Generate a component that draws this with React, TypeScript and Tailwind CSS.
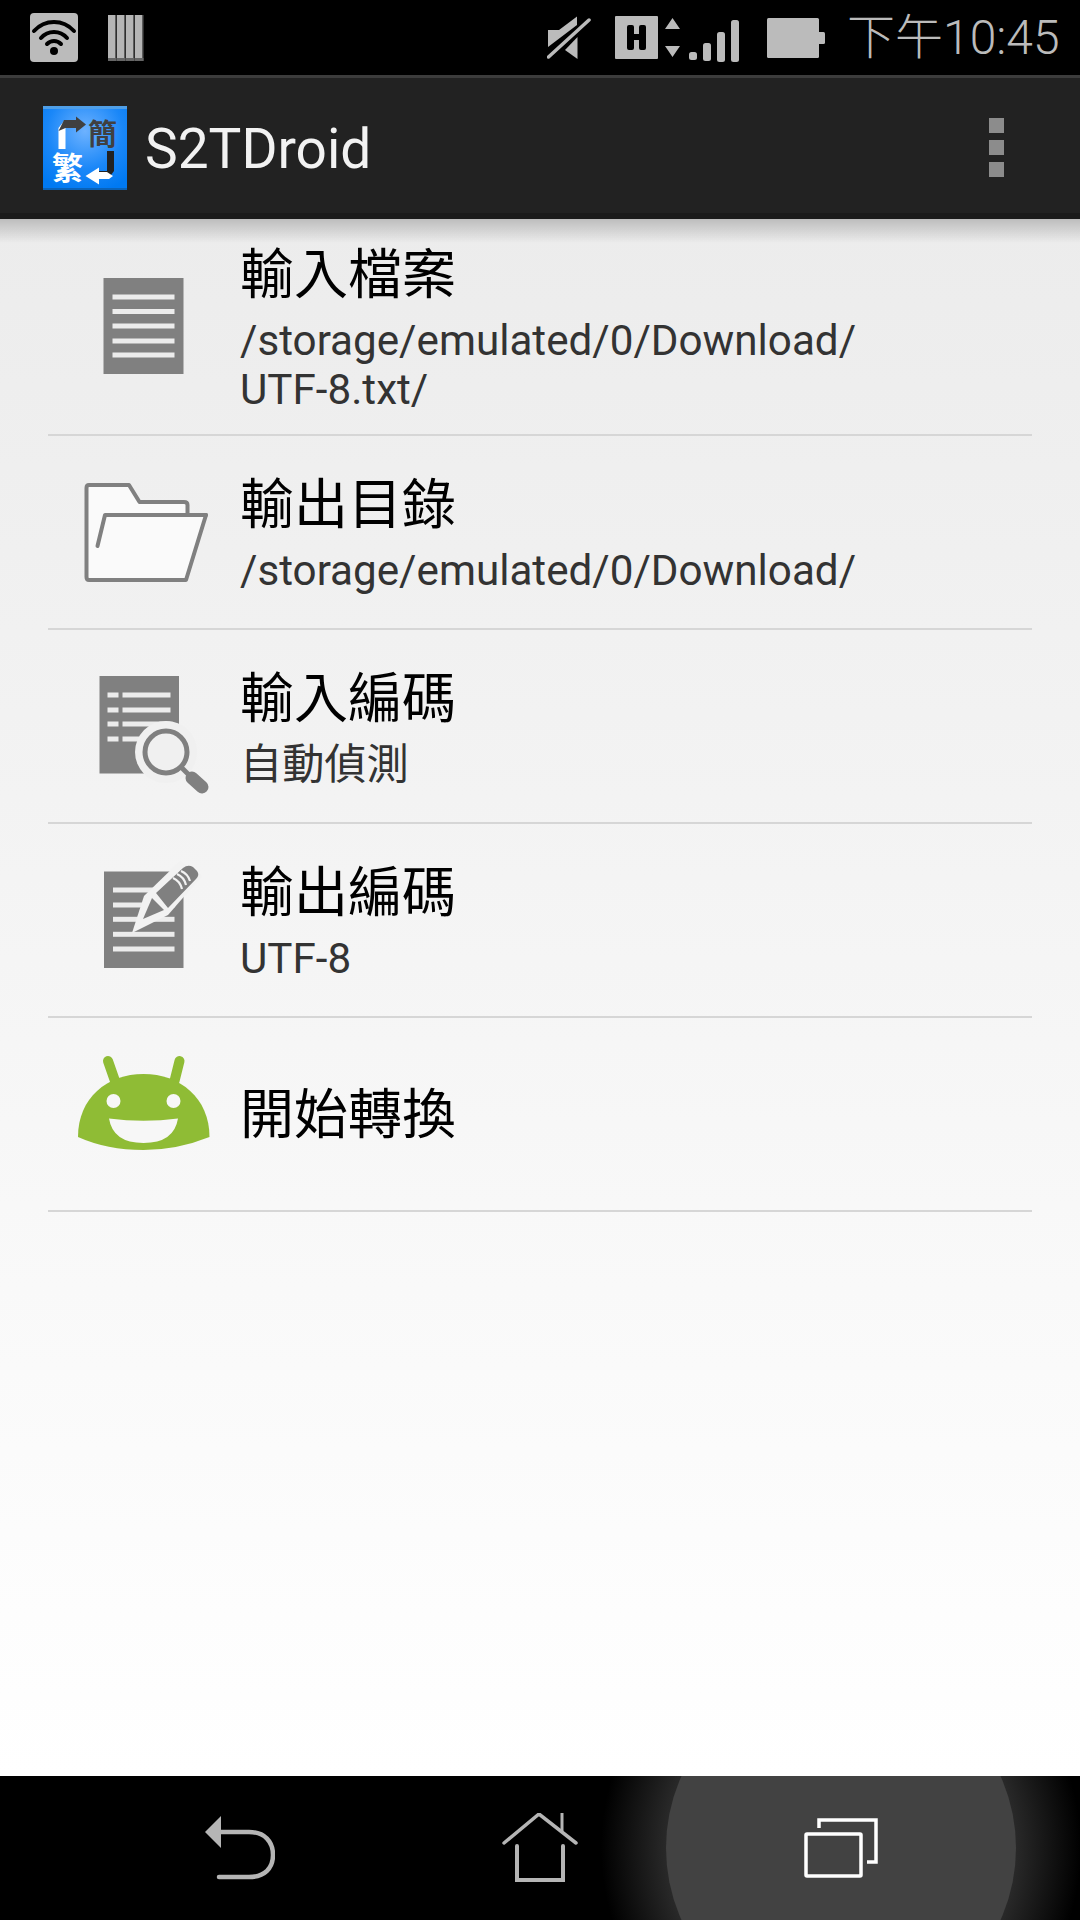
const cjk = "font-['Roboto','Noto_Sans_CJK_TC',sans-serif]";

function WifiIcon() {
  return (
    <svg width="48" height="49" viewBox="0 0 48 49">
      <rect width="48" height="49" rx="4" fill="#bbbbbb" />
      <g fill="none" stroke="#000" strokeWidth="4" strokeLinecap="round">
        <path d="M4 18 C15 6 33 6 44 18" />
        <path d="M11 25 C18 17 30 17 37 25" />
        <path d="M17 31 C21 27 27 27 31 31" />
      </g>
      <circle cx="24" cy="38" r="4" fill="#000" />
    </svg>
  );
}

function BarsIcon() {
  return (
    <svg width="36" height="46" viewBox="0 0 36 46">
      {[0, 9, 18, 27].map((x) => (
        <g key={x}>
          <rect x={x} width="8" height="46" fill="#b5b5b5" />
          <rect x={x + 7} width="1.5" height="46" fill="#5c5c5c" />
          <rect x={x} y="43" width="8.5" height="3" fill="#666666" />
        </g>
      ))}
    </svg>
  );
}

function MuteIcon() {
  return (
    <svg width="44" height="46" viewBox="0 0 44 46">
      <path d="M1 15 H12 L30 1.5 V10 L1 32 Z" fill="#bbbbbb" />
      <path d="M30.5 22 V44 L18 35 Z" fill="#bbbbbb" />
      <path d="M1.5 42 L42 5" stroke="#bbbbbb" strokeWidth="3.5" strokeLinecap="round" />
    </svg>
  );
}

function NetworkIcon() {
  return (
    <svg width="124" height="47" viewBox="0 0 124 47">
      <rect x="0" y="0" width="43" height="43" rx="1" fill="#bbbbbb" />
      <path d="M12 11 Q12 9 14 9 H17 Q19 9 19 11 V18 H24 V11 Q24 9 26 9 H29 Q31 9 31 11 V32 Q31 34 29 34 H26 Q24 34 24 32 V24 H19 V32 Q19 34 17 34 H14 Q12 34 12 32 Z" fill="#000" />
      <path d="M50 13 L57.5 2 L65 13 Z M50 30 H65 L57.5 41 Z" fill="#bbbbbb" />
      <rect x="74" y="36" width="8" height="8" rx="2.5" fill="#bbbbbb" />
      <rect x="88" y="27" width="8" height="18" rx="2.5" fill="#bbbbbb" />
      <rect x="102" y="16" width="8" height="30" rx="2.5" fill="#bbbbbb" />
      <rect x="116" y="4" width="8" height="42" rx="2.5" fill="#bbbbbb" />
    </svg>
  );
}

function BatteryIcon() {
  return (
    <svg width="58" height="40" viewBox="0 0 58 40">
      <rect x="0" y="0" width="52" height="40" rx="1.5" fill="#bbbbbb" />
      <rect x="50" y="14" width="8" height="12" rx="1.5" fill="#bbbbbb" />
    </svg>
  );
}

function AppLogo() {
  return (
    <svg width="84" height="84" viewBox="0 0 84 84">
      <defs>
        <radialGradient id="logoBlue" cx="0.5" cy="0.3" r="0.75">
          <stop offset="0" stopColor="#6db2ff" />
          <stop offset="0.6" stopColor="#1a87f8" />
          <stop offset="1" stopColor="#0079f2" />
        </radialGradient>
      </defs>
      <rect width="84" height="84" fill="url(#logoBlue)" />
      <rect width="84" height="3" fill="#4f9fe8" />
      <rect y="82" width="84" height="2" fill="#0a62b8" />
      <path d="M15.5 43 V22 L21 15 H30 V22 H22.5 V43 Z" fill="#ffffff" />
      <path d="M21 14 H33 V10.5 L43 18.5 L33 26.5 V22 H22.5 L15.5 25 Z" fill="#404040" />
      <path d="M64 45 H71 V65 L65 73 H55 V65 H64 Z" fill="#222222" />
      <path d="M64 66 H56 V61.5 L42.5 70 L56 78.5 V73 H66 L70 70 Z" fill="#ffffff" />
      <text x="45" y="39" fontSize="29" fontWeight="700" fill="#404040" fontFamily="'Noto Sans CJK TC', sans-serif">簡</text>
      <text x="9" y="73" fontSize="31" fontWeight="700" fill="#ffffff" fontFamily="'Noto Sans CJK TC', sans-serif">繁</text>
    </svg>
  );
}

function Line({ x1, x2, y, w = 5 }: { x1: number; x2: number; y: number; w?: number }) {
  return <rect x={x1} y={y - w / 2} width={x2 - x1} height={w} fill="#ececec" />;
}

function DocIcon() {
  return (
    <svg width="144" height="144" viewBox="0 0 144 144">
      <rect x="31.5" y="23" width="80" height="96" fill="#808080" />
      {[42, 56.5, 71, 86, 100].map((y) => (
        <Line key={y} x1={40.5} x2={102.5} y={y} />
      ))}
    </svg>
  );
}

function FolderIcon() {
  return (
    <svg width="144" height="144" viewBox="0 0 144 144" fill="none">
      <path
        d="M17 25 H57 L67.5 42 H112 Q115.5 42 115.5 45 V55 H134 L114 120 H17 Q14.5 120 14.5 117 V28 Q14.5 25 17 25 Z"
        fill="#fafafa"
        stroke="#808080"
        strokeWidth="4"
        strokeLinejoin="round"
      />
      <path d="M25.5 86 L33 55 H134" stroke="#808080" strokeWidth="4" strokeLinecap="round" strokeLinejoin="round" />
    </svg>
  );
}

function SearchDocIcon() {
  return (
    <svg width="144" height="144" viewBox="0 0 144 144" fill="none">
      <rect x="27.5" y="22" width="79.5" height="97.5" fill="#808080" />
      {[41, 56, 70, 85].map((y) => (
        <g key={y}>
          <Line x1={35.5} x2={46.5} y={y} />
          <Line x1={50.5} x2={98.5} y={y} />
        </g>
      ))}
      <circle cx="94" cy="98" r="31" fill="#f0f0f0" />
      <circle cx="94" cy="98" r="21" stroke="#808080" strokeWidth="5" />
      <path d="M110 114 L120 124" stroke="#808080" strokeWidth="5" />
      <path d="M120 124 L130 133" stroke="#808080" strokeWidth="13" strokeLinecap="round" />
    </svg>
  );
}

function PencilDocIcon() {
  return (
    <svg width="144" height="144" viewBox="0 0 144 144" fill="none">
      <rect x="32" y="23.5" width="79.5" height="96.5" fill="#808080" />
      {[42, 57, 71.3, 86.3, 101].map((y) => (
        <Line key={y} x1={41} x2={102.5} y={y} />
      ))}
      <path d="M60 85 L72 48 L108 13 L130 28 L96 67 Z" fill="#f2f2f2" />
      <path d="M84 45 L111 20 Q116 16 121 19 L125 23 Q128 27 124 31 L96 60 Z" fill="#808080" />
      <path d="M71 71 L80 50 L92 62 Z" fill="#808080" />
      <g stroke="#f2f2f2" strokeWidth="2.2">
        <path d="M101 30 Q108 33 110 41" />
        <path d="M105 26 Q112 29 114 37" />
        <path d="M109 23 Q116 26 118 33" />
      </g>
    </svg>
  );
}

function AndroidIcon() {
  return (
    <svg width="144" height="144" viewBox="0 0 144 144" fill="none">
      <path d="M36 19 L43 39 M107.5 19 L102.5 39" stroke="#8fbc35" strokeWidth="10" strokeLinecap="round" />
      <path d="M6 95 C6 56 35 32 71.5 32 C108 32 137.5 56 137.5 95 Q105 108 71.5 108 Q35 108 6 95 Z" fill="#8fbc35" />
      <circle cx="41.5" cy="59" r="7" fill="#f7f7f7" />
      <circle cx="101.5" cy="59" r="7" fill="#f7f7f7" />
      <path d="M37 76.5 Q71.5 81 106 76.5 Q102 101 71.5 101 Q41 101 37 76.5 Z" fill="#f7f7f7" />
    </svg>
  );
}

function BackIcon() {
  return (
    <svg width="70" height="64" viewBox="0 0 70 64" fill="none">
      <path d="M0 16 L16 0 V32 Z" fill="#b5b5b5" />
      <path d="M16 16 H44 C60 16 68 26 68 39 C68 52 60 61 44 61 H14" stroke="#b5b5b5" strokeWidth="4.5" strokeLinecap="round" />
    </svg>
  );
}

function HomeIcon() {
  return (
    <svg width="76" height="70" viewBox="0 0 76 70" fill="none">
      <path d="M2 30 L37 1 L74 30" stroke="#b5b5b5" strokeWidth="3.5" strokeLinecap="round" strokeLinejoin="round" />
      <path d="M60 0 V18" stroke="#b5b5b5" strokeWidth="3" />
      <path d="M15 33 V67 H61 V33" stroke="#b5b5b5" strokeWidth="4" strokeLinecap="round" />
    </svg>
  );
}

function RecentsIcon() {
  return (
    <svg width="74" height="60" viewBox="0 0 74 60" fill="none">
      <rect x="2" y="16" width="55" height="42" rx="1" stroke="#ffffff" strokeWidth="3.5" />
      <path d="M15 10 V2 H72 V44 H63" stroke="#ffffff" strokeWidth="3.5" />
    </svg>
  );
}

const rows = [
  { title: "輸入檔案", sub: ["/storage/emulated/0/Download/", "UTF-8.txt/"], icon: <DocIcon />, h: "h-[215px]" },
  { title: "輸出目錄", sub: ["/storage/emulated/0/Download/"], icon: <FolderIcon />, h: "h-[192px]" },
  { title: "輸入編碼", sub: ["自動偵測"], icon: <SearchDocIcon />, h: "h-[192px]" },
  { title: "輸出編碼", sub: ["UTF-8"], icon: <PencilDocIcon />, h: "h-[192px]" },
  { title: "開始轉換", sub: [], icon: <AndroidIcon />, h: "h-[192px]" },
];

export default function App() {
  return (
    <div className={`w-[1080px] h-[1920px] flex flex-col overflow-hidden bg-black ${cjk}`}>
      {/* status bar */}
      <div className="h-[75px] shrink-0 bg-black flex items-start">
        <div className="ml-[30px] mt-[13px]">
          <WifiIcon />
        </div>
        <div className="ml-[30px] mt-[15px]">
          <BarsIcon />
        </div>
        <div className="ml-[403px] mt-[15px]">
          <MuteIcon />
        </div>
        <div className="ml-[24px] mt-[16px]">
          <NetworkIcon />
        </div>
        <div className="ml-[28px] mt-[18px]">
          <BatteryIcon />
        </div>
        <div className="ml-[22px] h-[75px] flex items-center text-[48px] font-light text-[#bbbbbb] leading-none whitespace-nowrap">
          下午10:45
        </div>
      </div>

      {/* action bar */}
      <div className="h-[144px] shrink-0 bg-[#222222] border-t-[3px] border-t-[#3c3c3c] border-b-[6px] border-b-[#1b1b1b] flex items-center pt-[3px] pl-[43px] pr-[76px]">
        <div className="mt-[2px]">
          <AppLogo />
        </div>
        <span className="ml-[18px] mt-[4px] text-[55px] text-[#f2f2f2] leading-none">S2TDroid</span>
        <div className="ml-auto flex flex-col gap-[7px]">
          <div className="w-[15px] h-[15px] bg-[#8c8c8c]" />
          <div className="w-[15px] h-[15px] bg-[#8c8c8c]" />
          <div className="w-[15px] h-[15px] bg-[#8c8c8c]" />
        </div>
      </div>

      {/* list */}
      <div className="relative flex-1 bg-gradient-to-b from-[#ececec] to-[#ffffff]">
        <div className="absolute top-0 inset-x-0 h-[24px] bg-gradient-to-b from-[#00000033] to-transparent" />
        <div className="mx-[48px] flex flex-col">
          {rows.map((r) => (
            <div key={r.title} className={`${r.h} box-content border-b-2 border-[#d6d6d6] flex items-center`}>
              <div className="w-[192px] shrink-0 flex justify-center">{r.icon}</div>
              <div className="flex flex-col">
                <div className={r.sub.length ? "text-[54px] leading-[74px] mb-[3px] text-black" : "text-[54px] leading-[74px] pt-[4px] text-black"}>
                  {r.title}
                </div>
                {r.sub.map((s) => (
                  <div key={s} className="text-[42.2px] leading-[49px] text-[#333333]">
                    {s}
                  </div>
                ))}
              </div>
            </div>
          ))}
        </div>
      </div>

      {/* nav bar */}
      <div className="relative h-[144px] shrink-0 bg-black overflow-hidden grid grid-cols-[480px_120px_480px]">
        <div className="absolute left-[601px] top-[-168px] w-[480px] h-[480px] rounded-full bg-[radial-gradient(circle_closest-side,#2a2a2a_0%,#2a2a2a_72%,#000000_100%)]" />
        <div className="absolute left-[666px] top-[-103px] w-[350px] h-[350px] rounded-full bg-[#424242]" />
        <div className="relative flex items-center justify-center">
          <BackIcon />
        </div>
        <div className="relative flex items-center justify-center">
          <HomeIcon />
        </div>
        <div className="relative flex items-center justify-center">
          <div className="ml-[2px]">
            <RecentsIcon />
          </div>
        </div>
      </div>
    </div>
  );
}
